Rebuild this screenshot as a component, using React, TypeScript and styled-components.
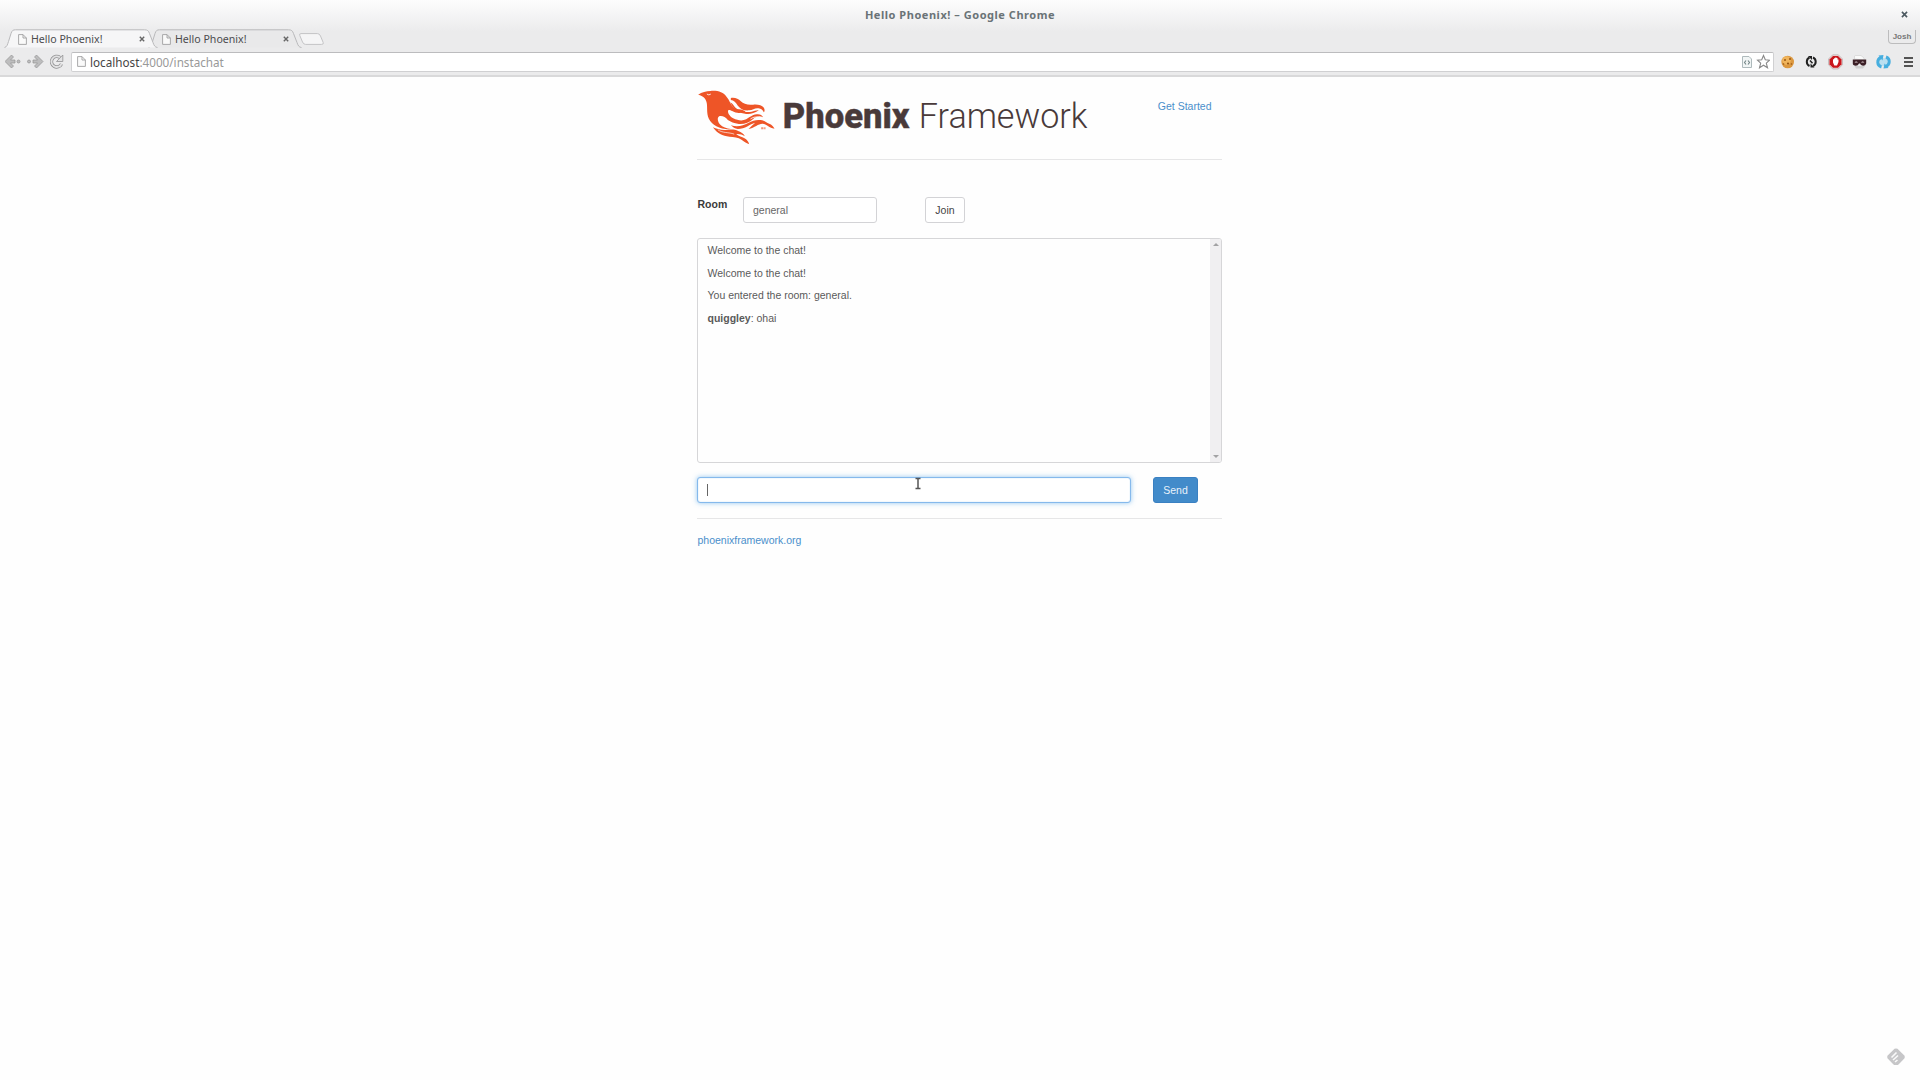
import React from "react";
import styled, { createGlobalStyle, css } from "styled-components";

const Global = createGlobalStyle`
  * { box-sizing: border-box; }
  html, body { margin: 0; padding: 0; height: 100%; background: #fefefe; overflow: hidden; }
`;

const uiFont = css`
  font-family: "Noto Sans", "Open Sans", sans-serif;
`;

const Screen = styled.div`
  position: relative;
  width: 1920px;
  height: 1080px;
  display: flex;
  flex-direction: column;
  font-family: "Liberation Sans", Arial, sans-serif;
  font-size: 10.5px;
  line-height: 15px;
  color: #5a5a5a;
`;

const Chrome = styled.header`
  height: 77px;
  display: flex;
  flex-direction: column;
  background: linear-gradient(#fdfdfd 0, #ebebec 32px, #ebebec 100%);
  border-bottom: 2px solid #d9d9da;
  ${uiFont}
`;

const TitleBar = styled.div`
  height: 29px;
  display: grid;
  grid-template-columns: 32px 1fr 32px;
  align-items: center;
  justify-items: center;
`;

const Title = styled.div`
  grid-column: 2;
  font-weight: 700;
  font-size: 11px;
  letter-spacing: 0.53px;
  color: #6a7377;
`;

const CloseGlyph = styled.svg<{ $size: number }>`
  position: relative;
  width: ${(p) => p.$size}px;
  height: ${(p) => p.$size}px;
  flex: none;
  fill: none;
`;

const TabStrip = styled.div`
  height: 19px;
  display: flex;
  align-items: flex-start;
  padding: 0 4px 0 4px;
`;

const Tab = styled.div<{ $active?: boolean }>`
  position: relative;
  z-index: ${(p) => (p.$active ? 1 : 0)};
  width: 154px;
  height: 19px;
  margin-right: -10px;
  padding: 1px 13px 0 14px;
  display: flex;
  align-items: center;
  gap: 4px;
`;

const TabShape = styled.svg`
  position: absolute;
  left: 0;
  top: 0;
  width: 100%;
  height: 100%;
`;

const TabText = styled.span`
  position: relative;
  flex: 1;
  font-size: 10.6px;
  line-height: 15px;
  color: #4c4c4e;
  white-space: nowrap;
`;

const PageGlyph = styled.svg`
  position: relative;
  flex: none;
  width: 9px;
  height: 11px;
`;

const NewTab = styled.svg`
  width: 25px;
  height: 12px;
  margin: 4px 0 0 7px;
`;

const Profile = styled.div`
  margin-left: auto;
  margin-top: 1px;
  width: 28px;
  height: 14px;
  border: 1px solid #bcbcbd;
  border-top: 0;
  border-radius: 0 0 4px 4px;
  text-align: center;
  font-family: "Liberation Sans", Arial, sans-serif;
  font-size: 8px;
  line-height: 14px;
  font-weight: 700;
  color: #777;
`;

const Toolbar = styled.div`
  height: 27px;
  display: flex;
  align-items: center;
  padding: 0 5px;
`;

const NavIcons = styled.svg`
  width: 66px;
  height: 19px;
  flex: none;
`;

const Omnibox = styled.div`
  flex: none;
  width: 1703px;
  height: 20px;
  margin-top: 1px;
  padding: 0 3px 1px 5px;
  display: flex;
  align-items: center;
  border: 1px solid #d0d0d2;
  border-top-color: #bcbcbe;
  border-radius: 2px;
  background: #fff;
`;

const Url = styled.span`
  flex: 1;
  margin-left: 4px;
  font-size: 11.7px;
  line-height: 16px;
  color: #999;
  white-space: nowrap;
`;

const Host = styled.span`
  color: #444;
`;

const BarIcons = styled.svg`
  width: 29px;
  height: 15px;
  flex: none;
`;

const Extensions = styled.svg`
  width: 140px;
  height: 18px;
  flex: none;
`;

const Container = styled.main`
  width: 525px;
  margin: 0 0 0 697px;
  display: flex;
  flex-direction: column;
`;

const Header = styled.div`
  height: 83px;
  padding: 0 10.5px 0 0.5px;
  display: flex;
  justify-content: space-between;
  align-items: flex-start;
  border-bottom: 1px solid #e6e6e7;
`;

const Logo = styled.svg`
  width: 400px;
  height: 66px;
  margin-top: 8px;
  flex: none;
`;

const Link = styled.a<{ $top: number }>`
  margin-top: ${(p) => p.$top}px;
  color: #4a8fcb;
  white-space: nowrap;
`;

const field = css`
  height: 26px;
  border: 1px solid #d3d3d6;
  border-radius: 3px;
  background: #fff;
  display: flex;
  align-items: center;
`;

const RoomForm = styled.div`
  margin-top: 37px;
  display: flex;
  align-items: flex-start;
`;

const RoomLabel = styled.label`
  width: 46px;
  padding-left: 0.5px;
  font-weight: 700;
  color: #3a3a3a;
`;

const RoomInput = styled.div`
  ${field}
  width: 134px;
  padding: 0 9px;
  color: #666;
`;

const JoinButton = styled.button`
  ${field}
  width: 40px;
  margin-left: 48px;
  padding: 0;
  justify-content: center;
  font: inherit;
  color: #444;
`;

const Messages = styled.div`
  height: 225px;
  margin-top: 15px;
  display: flex;
  border: 1px solid #d6d6d8;
  border-radius: 3px;
  overflow: hidden;
`;

const MessageList = styled.div`
  flex: 1;
  padding: 4px 9.5px;
`;

const Message = styled.p`
  margin: 0 0 7.5px;
`;

const ScrollTrack = styled.div`
  width: 11px;
  background: #f0eff1;
  display: flex;
  flex-direction: column;
  justify-content: space-between;
  align-items: center;
  padding: 4px 0 4px;
`;

const ScrollArrow = styled.svg`
  width: 6px;
  height: 3px;
  fill: #a2a2a4;
`;

const SendForm = styled.div`
  margin-top: 14px;
  display: flex;
`;

const MessageInput = styled.div`
  ${field}
  width: 434px;
  padding: 0 9px;
  border: 1px solid #85b9ec;
  box-shadow: 0 0 5px rgba(102, 175, 233, 0.7), inset 0 0 1px rgba(102, 175, 233, 0.8);
`;

const Caret = styled.span`
  width: 1px;
  height: 12px;
  background: #666;
`;

const SendButton = styled.button`
  ${field}
  width: 45px;
  margin-left: 22px;
  padding: 0;
  justify-content: center;
  border-color: #3a80c2;
  background: #428bca;
  color: #e9f2fa;
  font: inherit;
`;

const Footer = styled.footer`
  margin-top: 15px;
  padding: 14px 0 0 0.5px;
  border-top: 1px solid #e6e6e7;
  display: flex;
`;

const Pointer = styled.svg`
  position: absolute;
  left: 914px;
  top: 477px;
  width: 8px;
  height: 13px;
`;

const Feedly = styled.svg`
  position: absolute;
  left: 1886px;
  top: 1048px;
  width: 20px;
  height: 18px;
`;

const Cross = ({ size, color }: { size: number; color: string }) => (
  <CloseGlyph $size={size} viewBox="0 0 6 6">
    <path d="M.8.8 5.2 5.2M5.2.8.8 5.2" stroke={color} strokeWidth="1.4" />
  </CloseGlyph>
);

const Sheet = () => (
  <PageGlyph viewBox="0 0 9 11">
    <path d="M.6.6H5L8.4 4v6.4H.6zM5 .6V4h3.4" fill="#fafafa" stroke="#a0a0a1" strokeWidth=".9" />
  </PageGlyph>
);

const ChromeTab = ({ active }: { active?: boolean }) => (
  <Tab $active={active}>
    <TabShape viewBox="0 0 154 19">
      <path
        d="M.5 18.500C3 18 3.500 15.500 4.500 12.500L7 4.500C8 1.500 9 .8 11.500.8H140.500C143.500.8 144.500 1.800 145.500 4.500L149 13.500C150 16.500 151 18.300 153.500 18.500"
        fill={active ? "#f6f6f7" : "#e9e9ea"}
        stroke="#b9b9bb"
        strokeWidth="1"
      />
    </TabShape>
    <Sheet />
    <TabText>Hello Phoenix!</TabText>
    <Cross size={6} color="#666" />
  </Tab>
);

const PhoenixLogo = () => (
  <Logo viewBox="22.5 16 1200 198">
    <g fill="#ee5527">
      <path d="M23 45C34 37 47 35 60 34C81 32 99 38 108 51C117 61 119 73 128 82C136 91 148 87 158 92C164 95 169 100 174 104C158 97 151 101 140 99C126 97 121 90 114 91C109 97 117 110 128 116C143 123 156 124 167 119C177 114 183 106 199 104C209 103 214 107 218 113C206 107 196 111 188 118C176 129 162 134 145 133C130 131 121 127 112 121C105 112 94 107 86 110C79 114 82 127 88 134C96 143 109 147 121 148C87 149 65 137 55 117C47 99 52 81 48 67C45 56 39 49 23 45Z" />
      <path d="M121 55C134 53 143 57 151 65C159 73 172 77 188 75C202 74 214 76 220 84C223 89 223 94 220 98C217 91 212 87 204 86C194 84 187 91 176 92C160 94 149 87 142 78C136 69 130 62 121 61Z" />
      <path d="M119 68C129 73 132 85 143 90C156 96 171 99 183 96C191 94 198 91 205 92C191 101 181 104 168 103C147 101 129 91 119 68Z" />
      <path d="M121 137C144 143 158 137 173 130C188 121 202 119 215 122C224 124 229 130 236 132C244 134 248 140 252 147C239 145 233 139 226 135C208 125 198 143 174 148C180 141 188 135 194 129C178 133 164 148 142 148C133 147 127 143 121 137Z" />
      <path d="M67 143C78 147 90 152 105 151C121 149 133 149 143 154C153 158 160 162 163 170C154 164 147 162 137 163C145 170 154 171 162 176C169 180 174 186 176 194C167 190 160 185 153 180C143 173 130 172 117 171C96 170 80 161 67 143Z" />
      <path d="M212 143h7v6h-7zM221 143h4v6h-4z" opacity=".65" />
    </g>
    <g fill="none" stroke="#fefefe" strokeLinecap="round">
      <path d="M50 44Q55 48 60 44" strokeWidth="2.500" />
      <path d="M83 151C97 161 114 157 130 163" strokeWidth="2" />
      <path d="M181 117C195 108 205 112 214 119" strokeWidth="2.500" />
    </g>
    <g fontFamily="Roboto, sans-serif" fill="#493a3a">
      <text x="277" y="146" fontSize="106" fontWeight="800" textLength="380" lengthAdjust="spacingAndGlyphs" stroke="#493a3a" strokeWidth="1.500">
        Phoenix
      </text>
      <text x="685" y="146" fontSize="106" fontWeight="300" textLength="506" lengthAdjust="spacingAndGlyphs">
        Framework
      </text>
    </g>
  </Logo>
);

const NavGlyphs = () => (
  <NavIcons viewBox="5 52 66 19">
    <g fill="#bdbdbe" stroke="#929293" strokeWidth=".7" strokeLinejoin="round">
      <path d="M5 61.500 11.500 55 13.500 57 10.500 60H15V63H10.500L13.500 66 11.500 68Z" />
      <path d="M43 61.500 36.500 55 34.500 57 37.500 60H33V63H37.500L34.500 66 36.500 68Z" />
      <circle cx="18.500" cy="61.500" r="1.500" />
      <circle cx="29" cy="61.500" r="1.500" />
    </g>
    <path d="M60 57.500A5.300 5.300 0 1 0 61.500 64" fill="none" stroke="#929293" strokeWidth="3.300" />
    <path d="M60 57.500A5.300 5.300 0 1 0 61.500 64" fill="none" stroke="#e2e2e3" strokeWidth="1.800" />
    <path d="M62.800 55V61.500H56.500Z" fill="#e2e2e3" stroke="#929293" strokeWidth=".8" />
  </NavIcons>
);

const OmniboxGlyphs = () => (
  <BarIcons viewBox="1741 54 29 15">
    <path d="M1742.500 56.500H1749L1751.500 59V67.500H1742.500Z" fill="#f1f5f5" stroke="#aebabc" />
    <path d="M1746 60.500 1744.500 62.500 1746 64.500M1748 60.500 1749.500 62.500 1748 64.500" fill="none" stroke="#718384" strokeWidth="1.100" />
    <path d="M1763.500 55.500 1765.300 59.800 1769.500 60.200 1766.300 63.200 1767.500 67.700 1763.500 65.200 1759.500 67.700 1760.700 63.200 1757.500 60.200 1761.700 59.800Z" fill="#fff" stroke="#898989" strokeWidth="1.100" />
  </BarIcons>
);

const ExtensionGlyphs = () => (
  <Extensions viewBox="1774 53 140 18">
    <circle cx="1787.700" cy="62" r="6.300" fill="#dc9840" />
    <circle cx="1786.500" cy="60.500" r="4.300" fill="#efb45c" />
    <g fill="#985613">
      <circle cx="1785" cy="60" r="1" />
      <circle cx="1790" cy="59" r="1" />
      <circle cx="1788" cy="63.500" r="1.100" />
      <circle cx="1783.500" cy="64" r=".8" />
      <circle cx="1791.500" cy="64" r=".8" />
    </g>
    <g fill="none" stroke="#202020" strokeWidth="2">
      <path d="M1809.500 57.500A4.700 4.700 0 0 0 1809.500 66M1813 57.500A4.700 4.700 0 0 1 1813 66" />
      <path d="M1810 60.500 1812.500 63.300" strokeWidth="1.500" />
    </g>
    <path d="M1808 56H1812V60ZM1814.500 67.500H1810.500V63.500Z" fill="#202020" />
    <path d="M1832.700 54.800H1838.300L1842.500 59V64.700L1838.300 69H1832.700L1828.500 64.700V59Z" fill="#f0d0d0" stroke="#aaa" strokeWidth=".6" />
    <path d="M1833 56H1838L1841.500 59.500V64.300L1838 67.800H1833L1829.500 64.300V59.500Z" fill="#c9171d" />
    <path d="M1833 59.200V62.500L1834.300 65.500H1837L1838.500 62V59.500H1837.500V58H1836.500V57.500H1835.200V58.200H1834V59.200Z" fill="#fff" />
    <path d="M1854.500 59V56Q1855 55.200 1856 55.500H1861L1864 58V60Z" fill="#fafafa" stroke="#ccc" strokeWidth=".6" />
    <path d="M1854.500 66H1865L1863 68.500H1856Z" fill="#d0d0d0" />
    <path d="M1852.800 59.500H1866.200V63.500Q1865.500 65.800 1863 65.700 1860.500 65.500 1860 63.500H1859Q1858 65.800 1855.700 65.700 1852.800 65.500 1852.800 63.500Z" fill="#3c2027" />
    <path d="M1854.500 62.500Q1856 60.500 1858 62.500ZM1861 62.500Q1862.500 60.500 1864.500 62.500Z" fill="#ead9dc" />
    <circle cx="1883.500" cy="62" r="4" fill="#b9dff0" />
    <g fill="none" stroke="#46aedf" strokeWidth="3">
      <path d="M1881 57.500A5 5 0 0 0 1881.500 67M1886 57A5 5 0 0 1 1885.500 66.500" />
    </g>
    <path d="M1878.500 55.500 1883.500 55 1882.500 60.500ZM1888.500 68 1883.500 68.500 1884.500 63.500Z" fill="#46aedf" />
    <path d="M1904 58H1913M1904 62H1913M1904 66H1913" stroke="#535353" strokeWidth="2.200" />
  </Extensions>
);

export default function App() {
  return (
    <Screen>
      <Global />
      <Chrome>
        <TitleBar>
          <Title>Hello Phoenix! – Google Chrome</Title>
          <Cross size={7} color="#4c5960" />
        </TitleBar>
        <TabStrip>
          <ChromeTab active />
          <ChromeTab />
          <NewTab viewBox="0 0 25 12">
            <path d="M2 .6H18.500Q20.500.6 21.500 3L24.200 9.500Q25 11.400 22.500 11.400H6.500Q4.500 11.400 3.500 9L.8 2.500Q0 .6 2 .6Z" fill="#f5f5f6" stroke="#c3c3c5" />
          </NewTab>
          <Profile>Josh</Profile>
        </TabStrip>
        <Toolbar>
          <NavGlyphs />
          <Omnibox>
            <Sheet />
            <Url>
              <Host>localhost</Host>:4000/instachat
            </Url>
            <OmniboxGlyphs />
          </Omnibox>
          <ExtensionGlyphs />
        </Toolbar>
      </Chrome>
      <Container>
        <Header>
          <PhoenixLogo />
          <Link $top={22}>Get Started</Link>
        </Header>
        <RoomForm>
          <RoomLabel>Room</RoomLabel>
          <RoomInput>general</RoomInput>
          <JoinButton>Join</JoinButton>
        </RoomForm>
        <Messages>
          <MessageList>
            <Message>Welcome to the chat!</Message>
            <Message>Welcome to the chat!</Message>
            <Message>You entered the room: general.</Message>
            <Message>
              <b>quiggley</b>: ohai
            </Message>
          </MessageList>
          <ScrollTrack>
            <ScrollArrow viewBox="0 0 6 3"><path d="M0 3 3 0 6 3Z" /></ScrollArrow>
            <ScrollArrow viewBox="0 0 6 3"><path d="M0 0 3 3 6 0Z" /></ScrollArrow>
          </ScrollTrack>
        </Messages>
        <SendForm>
          <MessageInput>
            <Caret />
          </MessageInput>
          <SendButton>Send</SendButton>
        </SendForm>
        <Footer>
          <Link $top={0}>phoenixframework.org</Link>
        </Footer>
      </Container>
      <Pointer viewBox="0 0 8 13">
        <path d="M1.500 1.500H6.500M1.500 11.500H6.500M4 1.500V11.500" stroke="#555" strokeWidth="1.500" fill="none" />
      </Pointer>
      <Feedly viewBox="0 0 20 18">
        <path d="M8.500.8Q10 0 11.500.8L18.300 7.600Q19.500 9 18.300 10.400L12.500 16.500Q11.800 17 11 17H9Q8.200 17 7.500 16.500L1.700 10.400Q.5 9 1.700 7.600Z" fill="#c6c6c8" />
        <path d="M5.500 9.500 10.500 4.500M7 12 12 7.500M9 14 11.500 12" stroke="#fafafa" strokeWidth="1.600" fill="none" />
      </Feedly>
    </Screen>
  );
}
